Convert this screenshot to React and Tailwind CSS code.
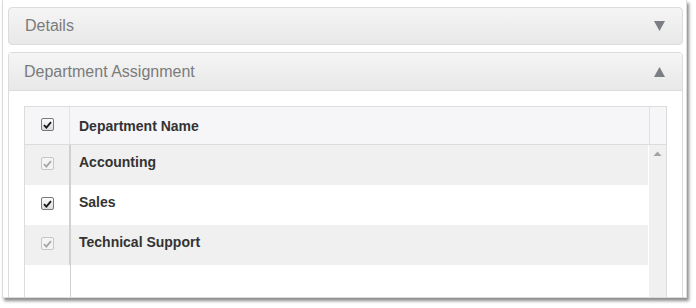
import React from "react";

function Check({ disabled }) {
  return (
    <span
      className={
        "flex h-[13px] w-[13px] items-center justify-center rounded-[2px] border " +
        (disabled
          ? "border-[#c6c6c6] bg-[#f4f4f4]"
          : "border-[#7a7a7a] bg-gradient-to-b from-[#fdfdfd] to-[#dcdcdc]")
      }
    >
      <svg width="9" height="8" viewBox="0 0 9 8">
        <path
          d="M1 4.2 L3.4 6.6 L8 1.2"
          fill="none"
          stroke={disabled ? "#a8a8a8" : "#1a1a1a"}
          strokeWidth="1.9"
        />
      </svg>
    </span>
  );
}

function Row({ name, disabled, gray }) {
  return (
    <div className={"flex h-[40px] shrink-0 items-center " + (gray ? "bg-[#f0f0f0]" : "bg-white")}>
      <div className="flex h-full w-[45px] items-center justify-center border-r border-[#d0d0d0] pb-[3px]">
        <Check disabled={disabled} />
      </div>
      <div className="pb-[5px] pl-[9px] text-[14px] font-bold text-[#333]">{name}</div>
    </div>
  );
}

function Tri({ up }) {
  return (
    <svg width="11" height="10" viewBox="0 0 11 10">
      <path d={up ? "M0 10 L5.5 0 L11 10 Z" : "M0 0 L5.5 10 L11 0 Z"} fill="#7b7e83" />
    </svg>
  );
}

export default function App() {
  return (
    <div className="h-[308px] w-[696px] bg-white" style={{ fontFamily: '"Liberation Sans", Arial, sans-serif' }}>
      <div className="ml-[2px] flex h-[298px] w-[685px] flex-col overflow-hidden border-l border-r border-b border-[#dcdcdc] bg-white pl-[5px] pr-[3px] pt-[7px] shadow-[2px_3px_3px_rgba(0,0,0,0.45)]">
        <div className="flex h-[38px] shrink-0 items-center justify-between rounded-[4px] border border-[#dcdcdc] bg-gradient-to-b from-[#f5f5f5] to-[#e8e8e8] pl-[16px] pr-[17px]">
          <span className="text-[16px] text-[#7b7b7b]">Details</span>
          <Tri />
        </div>
        <div className="mt-[7px] flex min-h-0 flex-1 flex-col rounded-t-[4px] border border-b-0 border-[#dcdcdc]">
          <div className="flex h-[38px] shrink-0 items-center justify-between border-b border-[#dcdcdc] bg-gradient-to-b from-[#f5f5f5] to-[#e8e8e8] pl-[15px] pr-[17px]">
            <span className="text-[16px] text-[#7b7b7b]">Department Assignment</span>
            <Tri up />
          </div>
          <div className="flex min-h-0 flex-1 flex-col bg-white px-[15px] pt-[15px]">
            <div className="flex min-h-0 flex-1 flex-col border border-b-0 border-[#dcdcdc]">
              <div className="flex h-[38px] shrink-0 border-b border-[#dcdcdc] bg-[#f6f6f8]">
                <div className="flex w-[45px] items-center justify-center border-r border-[#e4e4e4] pb-[2px]">
                  <Check />
                </div>
                <div className="flex flex-1 items-center pl-[9px] pt-[1px] text-[14px] font-bold text-[#333]">
                  Department Name
                </div>
                <div className="w-[17px] border-l border-[#e0e0e0]" />
              </div>
              <div className="flex min-h-0 flex-1">
                <div className="relative flex flex-1 flex-col">
                  <div className="absolute bottom-0 left-[45px] top-0 w-px bg-[#d0d0d0]" />
                  <Row name="Accounting" disabled gray />
                  <Row name="Sales" />
                  <Row name="Technical Support" disabled gray />
                </div>
                <div className="ml-[1px] flex w-[17px] justify-center bg-[#f0f0f0] pt-[6px]">
                  <svg width="9" height="5" viewBox="0 0 9 5">
                    <path d="M0.5 5 L4.5 0.5 L8.5 5 Z" fill="#a3a3a3" />
                  </svg>
                </div>
              </div>
            </div>
          </div>
        </div>
      </div>
    </div>
  );
}
